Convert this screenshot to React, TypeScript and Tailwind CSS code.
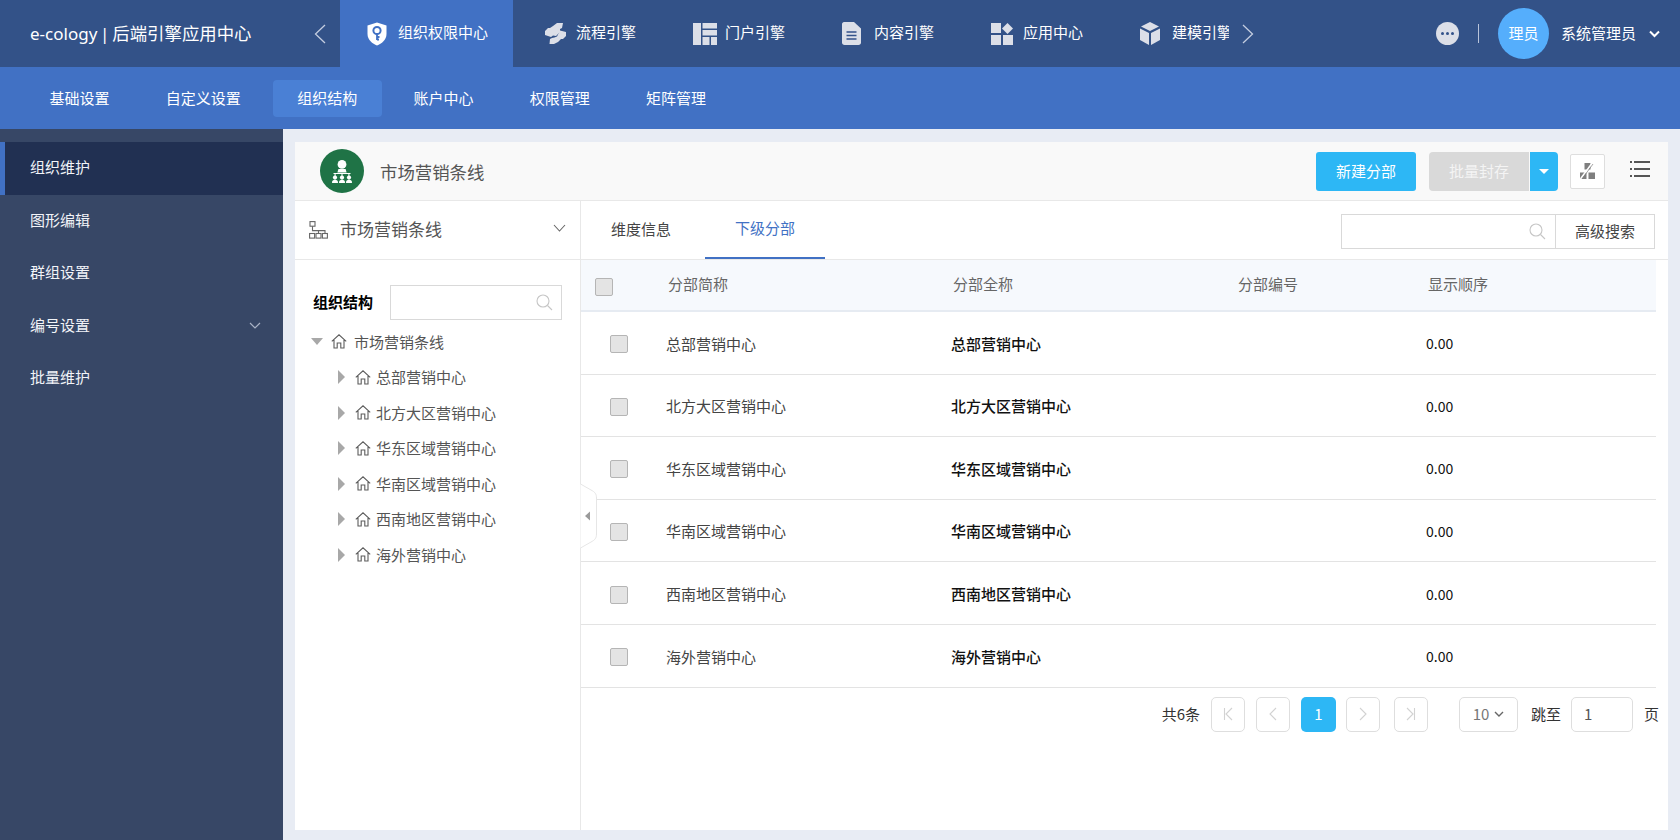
import React from "react";

const C = "#dcdfe8";

const Shield = () => (
  <svg width="20" height="24" viewBox="0 0 20 24">
    <path d="M10 0.5 L19.5 3.5 V12 C19.5 18 14.5 21.8 10 23.5 C5.5 21.8 0.5 18 0.5 12 V3.5 Z" fill="#fff" />
    <circle cx="10" cy="8.5" r="3.6" fill="none" stroke="#4171c4" strokeWidth="2" />
    <path d="M10 12 V18 M10 15 H12.5 M10 17.5 H12" stroke="#4171c4" strokeWidth="1.8" fill="none" />
  </svg>
);
const Flow = () => (
  <svg width="23" height="23" viewBox="0 0 23 23" fill={C}>
    <path d="M13 1 L19 1 L18 6 L16 7 L16 10 L12 14 L9 13.5 L7 15 L1 13 L1 9 L4 6 L6 6 L9 4 Z" />
    <path d="M16 8.5 L22 10 L22 14 L19 17 L17 17 L14 20 L10 22 L5.5 22 L6 17 L8 16 L10.5 15.5 L13 14.5 Z" />
  </svg>
);
const Portal = () => (
  <svg width="24" height="22" viewBox="0 0 24 22" fill={C}>
    <rect x="0" y="0" width="8" height="22" />
    <rect x="9.5" y="0" width="14.5" height="5.5" />
    <rect x="9.5" y="7" width="14.5" height="5.5" />
    <rect x="9.5" y="14" width="7" height="8" />
    <rect x="18" y="14" width="6" height="8" />
  </svg>
);
const Doc = () => (
  <svg width="19" height="23" viewBox="0 0 19 23">
    <path d="M2 0 H12 L19 6.5 V20.5 C19 22 18 23 16.5 23 H2.5 C1 23 0 22 0 20.5 V2 C0 1 1 0 2 0 Z" fill={C} />
    <path d="M4.5 10 H14.5 M4.5 13.5 H14.5 M4.5 17 H14.5" stroke="#33528a" strokeWidth="1.6" />
  </svg>
);
const Apps = () => (
  <svg width="22" height="22" viewBox="0 0 22 22" fill={C}>
    <rect x="0" y="0" width="10" height="10" />
    <path d="M16.5 0 L22 5.5 L16.5 11 L11 5.5 Z" />
    <rect x="0" y="12" width="10" height="10" />
    <rect x="12" y="12" width="10" height="10" />
  </svg>
);
const Cube = () => (
  <svg width="20" height="23" viewBox="0 0 20 23" fill={C}>
    <path d="M10 0 L19 4.5 L10 9 L1 4.5 Z" />
    <path d="M0 6.5 L9 11 V23 L0 18 Z" />
    <path d="M20 6.5 L11 11 V23 L20 18 Z" />
  </svg>
);
const ChevL = () => (
  <svg width="12" height="20" viewBox="0 0 12 20" fill="none" stroke="#c4cde0" strokeWidth="1.3">
    <path d="M11 1 L1.5 10 L11 19" />
  </svg>
);
const ChevR = () => (
  <svg width="12" height="20" viewBox="0 0 12 20" fill="none" stroke="#c4cde0" strokeWidth="1.3">
    <path d="M1 1 L10.5 10 L1 19" />
  </svg>
);
const Search = () => (
  <svg width="17" height="17" viewBox="0 0 17 17" fill="none" stroke="#c6c6c6" strokeWidth="1.1">
    <circle cx="7" cy="7" r="6" />
    <path d="M11.5 11.5 L16 16" />
  </svg>
);
const Org = () => (
  <svg width="20" height="23" viewBox="0 0 20 23" fill="#fff">
    <circle cx="10" cy="4.4" r="4.4" />
    <path d="M6.4 9 H13.6 L14.6 12.4 H5.4 Z" />
    <path d="M1.5 13 H18.5 V14 H1.5 Z" />
    <path d="M2.6 13.5 H3.6 V16 H2.6 Z M9.5 13.5 H10.5 V16 H9.5 Z M16.4 13.5 H17.4 V16 H16.4 Z" />
    <circle cx="3" cy="17.6" r="2.1" /><circle cx="10" cy="17.6" r="2.1" /><circle cx="17" cy="17.6" r="2.1" />
    <path d="M0 23 C0 20.4 1 19.8 3 19.8 C5 19.8 6 20.4 6 23 Z M7 23 C7 20.4 8 19.8 10 19.8 C12 19.8 13 20.4 13 23 Z M14 23 C14 20.4 15 19.8 17 19.8 C19 19.8 20 20.4 20 23 Z" />
  </svg>
);
const TreeIcon = () => (
  <svg width="19" height="18" viewBox="0 0 19 18" fill="none" stroke="#666" strokeWidth="1.1">
    <rect x="1" y="0.6" width="5" height="4.6" />
    <rect x="0.6" y="12.5" width="5" height="4.6" />
    <rect x="7" y="12.5" width="5" height="4.6" />
    <rect x="13.4" y="12.5" width="5" height="4.6" />
    <path d="M3.5 5.2 V9.6 H16 V12.5 M9.5 9.6 V12.5" />
  </svg>
);
const House = () => (
  <svg width="16" height="15" viewBox="0 0 16 15" fill="none" stroke="#5c5c5c" strokeWidth="1.1">
    <path d="M0.8 7.4 L8 0.8 L15.2 7.4 M3 6 V14 H6.2 V9 H9.8 V14 H13 V6" />
  </svg>
);
const Chart = () => (
  <svg width="15" height="16" viewBox="0 0 15 16" fill="#7f7f7f">
    <rect x="4.5" y="0" width="6" height="6.5" />
    <rect x="0" y="9.5" width="6.5" height="6.5" />
    <rect x="8.5" y="9.5" width="6.5" height="6.5" />
    <path d="M0.5 16 L11.5 1" stroke="#fff" strokeWidth="1.6" />
    <path d="M2 16 L13 1" stroke="#7f7f7f" strokeWidth="0.7" />
  </svg>
);
const ListI = () => (
  <svg width="20" height="18" viewBox="0 0 20 18" fill="#555">
    <rect x="0" y="1" width="2" height="2" /><rect x="4" y="1" width="16" height="2" />
    <rect x="0" y="8" width="2" height="2" /><rect x="4" y="8" width="16" height="2" />
    <rect x="0" y="15" width="2" height="2" /><rect x="4" y="15" width="16" height="2" />
  </svg>
);
const Pager = ({ d }: { d: string }) => (
  <span className="flex h-[35px] w-[34px] items-center justify-center rounded-[5px] border border-[#dedede] bg-white">
    <svg width="12" height="14" viewBox="0 0 12 14" fill="none" stroke="#d2d2d2" strokeWidth="1.1"><path d={d} /></svg>
  </span>
);

const tabs: [React.ReactNode, string][] = [
  [<Flow />, "流程引擎"],
  [<Portal />, "门户引擎"],
  [<Doc />, "内容引擎"],
  [<Apps />, "应用中心"],
  [<Cube />, "建模引擎"],
];
const sub = ["基础设置", "自定义设置", "组织结构", "账户中心", "权限管理", "矩阵管理"];
const side = ["组织维护", "图形编辑", "群组设置", "编号设置", "批量维护"];
const names = ["总部营销中心", "北方大区营销中心", "华东区域营销中心", "华南区域营销中心", "西南地区营销中心", "海外营销中心"];
const Box = () => <span className="block h-[18px] w-[18px] rounded-[2px] border border-[#b5b5b5] bg-[#e4e4e4]" />;

export default function App() {
  return (
    <div className="flex h-[840px] w-[1680px] flex-col overflow-hidden bg-[#e8ecf4] font-['Noto_Sans_CJK_SC','Noto_Sans',sans-serif] text-[15px]">
      <header className="flex h-[67px] shrink-0 items-stretch bg-[#335288] text-white">
        <div className="flex w-[340px] items-center justify-between pl-[30px] pr-[14px] text-[17px]">
          <span className="pb-[1px] font-['Noto_Sans','Noto_Sans_CJK_SC',sans-serif] [word-spacing:-1.6px]">e-cology | <span className="text-[17.4px]">后端引擎应用中心</span></span>
          <ChevL />
        </div>
        <div className="flex w-[173px] items-center gap-[11px] bg-[#4171c4] pl-[27px]">
          <Shield />
          <span className="pb-[2px]">组织权限中心</span>
        </div>
        {tabs.map(([ic, t]) => (
          <div key={t} className="flex w-[149px] items-center pl-[31px]">
            <span className="flex w-[32px] shrink-0 items-center">{ic}</span>
            <span className={`pb-[2px] ${t === "建模引擎" ? "w-[57px] overflow-hidden whitespace-nowrap" : ""}`}>{t}</span>
          </div>
        ))}
        <div className="flex items-center">
          <span className="-ml-[16px]"><ChevR /></span>
        </div>
        <div className="ml-auto flex items-center pr-[20px]">
          <span className="flex h-[23px] w-[23px] items-center justify-center gap-[2px] rounded-full bg-[#dcdfe8]">
            <i className="h-[3px] w-[3px] rounded-full bg-[#33528a]" />
            <i className="h-[3px] w-[3px] rounded-full bg-[#33528a]" />
            <i className="h-[3px] w-[3px] rounded-full bg-[#33528a]" />
          </span>
          <span className="ml-[19px] h-[19px] w-px bg-[#b9c4da]" />
          <span className="ml-[19px] flex h-[51px] w-[51px] items-center justify-center rounded-full bg-[#55aefc]">理员</span>
          <span className="ml-[12px]">系统管理员</span>
          <svg className="ml-[13px]" width="11" height="8" viewBox="0 0 11 8" fill="none" stroke="#fff" strokeWidth="2"><path d="M1 1.5 L5.5 6 L10 1.5" /></svg>
        </div>
      </header>

      <nav className="flex h-[62px] shrink-0 items-center gap-[7.3px] bg-[#4171c4] pl-[25px] text-white">
        {sub.map((s) => (
          <span key={s} className={`flex h-[37px] items-center rounded-[4px] px-[24.5px] ${s === "组织结构" ? "bg-[#4a80d5]" : ""}`}>{s}</span>
        ))}
      </nav>

      <div className="flex min-h-0 flex-1">
        <aside className="w-[283px] shrink-0 bg-[#374766] pt-[13px] text-[#f2f4f8]">
          {side.map((s, i) => (
            <div key={s} className={`flex h-[52.6px] items-center justify-between pb-[2px] pr-[22px] ${i === 0 ? "border-l-[5px] border-[#4171c4] bg-[#213052] pl-[25px]" : "pl-[30px]"}`}>
              <span>{s}</span>
              {s === "编号设置" && (
                <svg width="12" height="7" viewBox="0 0 12 7" fill="none" stroke="#aab3c6" strokeWidth="1.2"><path d="M1 1 L6 6 L11 1" /></svg>
              )}
            </div>
          ))}
        </aside>

        <main className="flex min-w-0 flex-1 pb-[10px] pl-[12px] pr-[12px] pt-[13px]">
          <div className="flex min-w-0 flex-1 flex-col bg-white">
            <div className="flex h-[59px] shrink-0 items-center border-b border-[#e8e8e8] bg-[#f9f9f9] pl-[25px]">
              <span className="flex h-[44px] w-[44px] items-center justify-center rounded-full bg-[#1f7346]"><Org /></span>
              <span className="ml-[16px] mt-[2px] text-[17.4px] text-[#555]">市场营销条线</span>
              <span className="ml-auto flex h-[39px] w-[100px] items-center justify-center rounded-[3px] bg-[#2db7f5] text-white">新建分部</span>
              <span className="ml-[13px] flex h-[39px] w-[100px] items-center justify-center rounded-l-[4px] bg-[#d9d9d9] text-[#f4f4f4]">批量封存</span>
              <span className="ml-px flex h-[39px] w-[28px] items-center justify-center rounded-r-[4px] bg-[#2db7f5]">
                <i className="h-0 w-0 border-x-[5px] border-t-[5px] border-x-transparent border-t-white" />
              </span>
              <span className="ml-[12px] flex h-[35px] w-[35px] items-center justify-center rounded-[2px] border border-[#dedede] bg-white"><Chart /></span>
              <span className="mb-[5px] ml-[25px] mr-[18px]"><ListI /></span>
            </div>

            <div className="relative flex min-h-0 flex-1">
              <section className="w-[286px] shrink-0 border-r border-[#e8e8e8]">
                <div className="flex h-[59px] items-center border-b border-[#e8e8e8] pl-[14px] pr-[14px]">
                  <TreeIcon />
                  <span className="ml-[12px] pb-[2px] text-[17px] text-[#555]">市场营销条线</span>
                  <svg className="mb-[4px] ml-auto" width="13" height="8" viewBox="0 0 13 8" fill="none" stroke="#666" strokeWidth="1.1"><path d="M1 1 L6.5 7 L12 1" /></svg>
                </div>
                <div className="flex items-center pl-[18px] pt-[25px]">
                  <b className="pb-[1px] font-bold text-black">组织结构</b>
                  <span className="ml-[17px] flex h-[35px] w-[172px] items-center justify-end border border-[#d9d9d9] pr-[8px]"><Search /></span>
                </div>
                <div className="pt-[4px] text-[#555]">
                  <div className="flex h-[35.5px] items-center pl-[16px]">
                    <i className="h-0 w-0 border-x-[6.5px] border-t-[7px] border-x-transparent border-t-[#a8a8a8]" />
                    <span className="ml-[8px]"><House /></span>
                    <span className="ml-[7px]">市场营销条线</span>
                  </div>
                  {names.map((n) => (
                    <div key={n} className="flex h-[35.5px] items-center pl-[43px]">
                      <i className="h-0 w-0 border-y-[7px] border-l-[7px] border-y-transparent border-l-[#a8a8a8]" />
                      <span className="ml-[10px]"><House /></span>
                      <span className="ml-[5px]">{n}</span>
                    </div>
                  ))}
                </div>
              </section>

              <svg className="absolute left-[285px] top-[282px]" width="18" height="66" viewBox="0 0 18 66">
                <path d="M0.5 1 L11 7 C15 9 16.5 11 16.5 15 V51 C16.5 55 15 57 11 59 L0.5 65" fill="#fff" stroke="#e6e6e6" />
                <path d="M5 33 L10 28.5 V37.5 Z" fill="#9a9a9a" />
              </svg>

              <section className="flex min-w-0 flex-1 flex-col">
                <div className="flex h-[59px] shrink-0 items-stretch border-b border-[#e8e8e8] pr-[13px]">
                  <span className="flex w-[120px] items-center justify-center pb-[2px] text-[#444]">维度信息</span>
                  <span className="ml-[4px] flex w-[120px] items-center justify-center border-b-2 border-[#4171c4] pb-[1px] text-[#4171c4]">下级分部</span>
                  <div className="ml-auto mt-[13px] flex h-[35px] w-[314px] border border-[#d9d9d9]">
                    <span className="flex flex-1 items-center justify-end border-r border-[#d9d9d9] pr-[9px]"><Search /></span>
                    <span className="flex w-[98px] items-center justify-center text-[#444]">高级搜索</span>
                  </div>
                </div>

                <div className="mr-[12px]">
                  <div className="grid h-[52px] grid-cols-[87px_285px_285px_190px_1fr] items-center border-b-2 border-[#e6ebf2] bg-[#f6f9fd] text-[#666]">
                    <span className="pl-[14px] pt-[3px]"><Box /></span>
                    <span className="pb-[1px]">分部简称</span>
                    <span className="pb-[1px]">分部全称</span>
                    <span className="pb-[1px]">分部编号</span>
                    <span className="pb-[1px]">显示顺序</span>
                  </div>
                  {names.map((n) => (
                    <div key={n} className="grid h-[62.6px] grid-cols-[85px_285px_475px_1fr] items-center border-b border-[#e3e3e3]">
                      <span className="pl-[29px] pt-[3px]"><Box /></span>
                      <span className="pt-[2px] text-[#444]">{n}</span>
                      <span className="pt-[2px] font-medium text-[#111]">{n}</span>
                      <span className="pt-[2px] text-[14px] text-[#111]">0.00</span>
                    </div>
                  ))}
                  <div className="-mr-[3px] flex items-center justify-end pt-[9px] text-[#333]">
                    <span className="mr-[11px]">共6条</span>
                    <Pager d="M2.5 1 V13 M10 1 L4 7 L10 13" />
                    <span className="ml-[11px]"><Pager d="M9 1 L3 7 L9 13" /></span>
                    <span className="ml-[11px] flex h-[35px] w-[35px] items-center justify-center rounded-[5px] bg-[#2db7f5] text-[15px] text-white">1</span>
                    <span className="ml-[10px]"><Pager d="M3 1 L9 7 L3 13" /></span>
                    <span className="ml-[14px]"><Pager d="M2 1 L8 7 L2 13 M9.5 1 V13" /></span>
                    <span className="ml-[31px] flex h-[35px] w-[59px] items-center justify-center gap-[5px] rounded-[5px] border border-[#dedede] text-[#777]">
                      <span>10</span>
                      <svg width="10" height="6" viewBox="0 0 10 6" fill="none" stroke="#666" strokeWidth="1.4"><path d="M1 1 L5 5 L9 1" /></svg>
                    </span>
                    <span className="ml-[13px]">跳至</span>
                    <span className="ml-[10px] flex h-[35px] w-[62px] items-center rounded-[5px] border border-[#dedede] pl-[12px] text-[#555]">1</span>
                    <span className="ml-[11px]">页</span>
                  </div>
                </div>
              </section>
            </div>
          </div>
        </main>
      </div>
    </div>
  );
}
